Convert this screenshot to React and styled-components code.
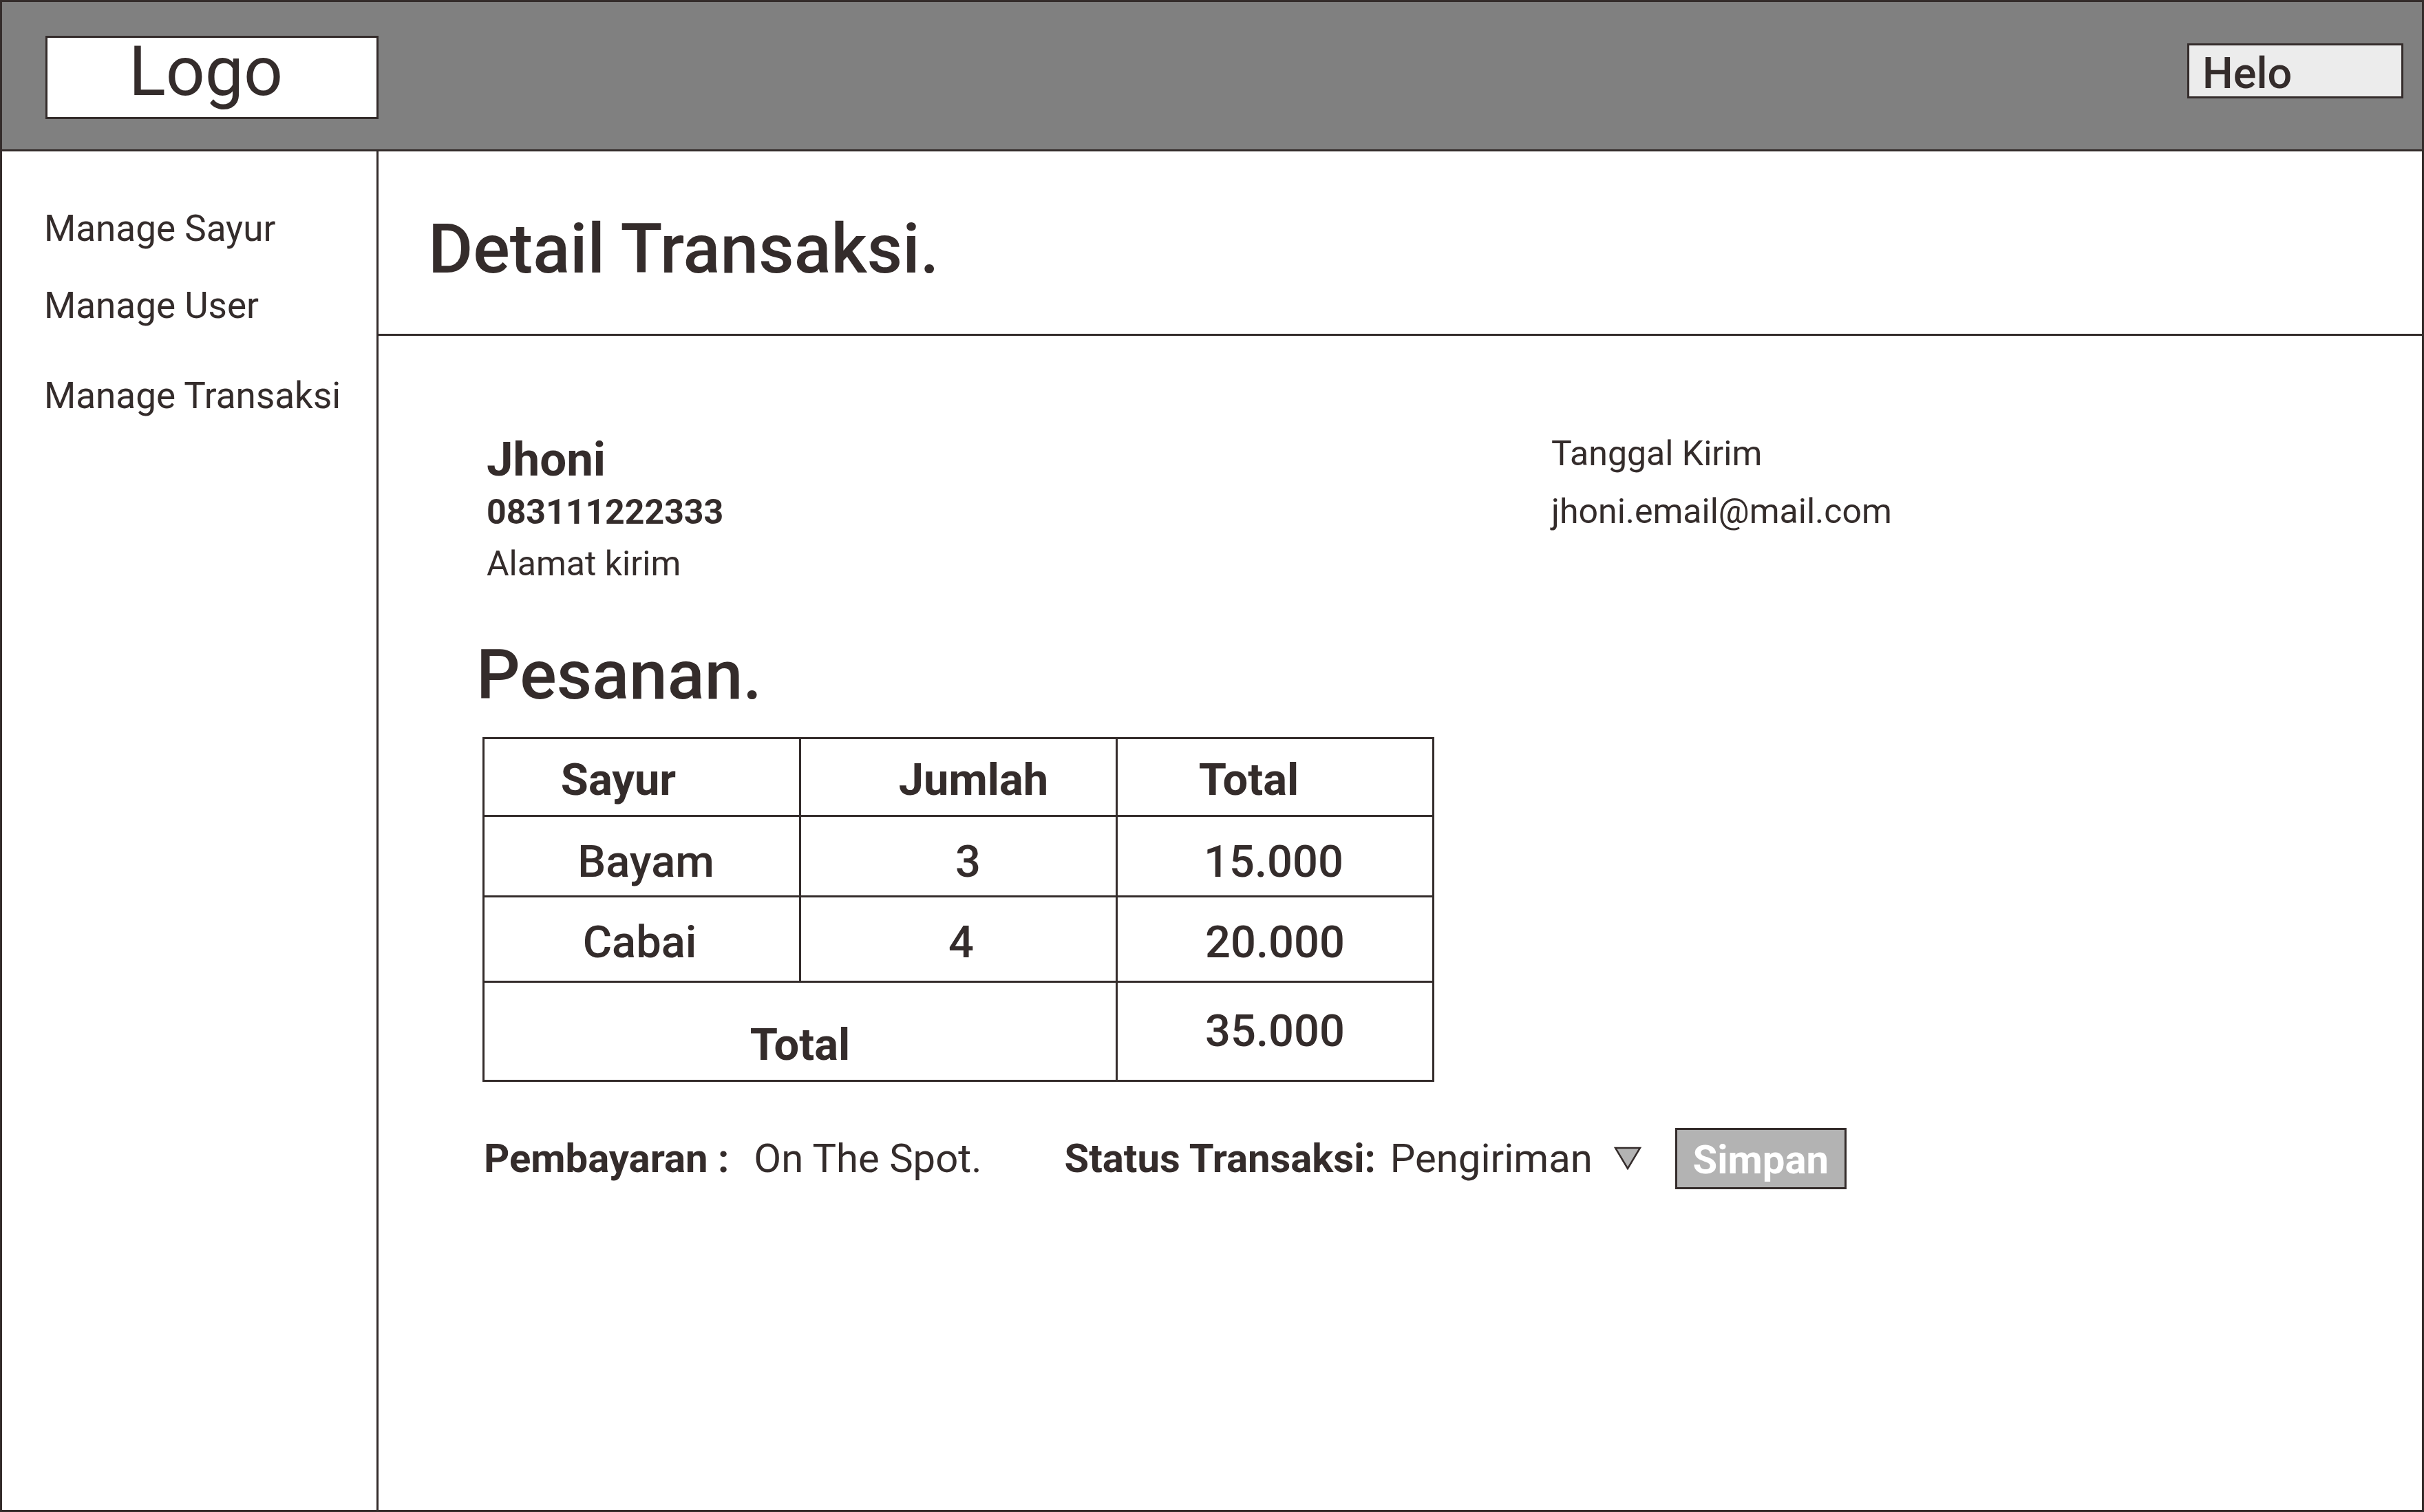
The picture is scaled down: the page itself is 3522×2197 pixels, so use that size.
import React from 'react';
import styled, { createGlobalStyle } from 'styled-components';

const ink = '#342c2b';

const GlobalStyle = createGlobalStyle`
  html, body {
    margin: 0;
    padding: 0;
    background: #fff;
  }
  body {
    font-family: Roboto, "Liberation Sans", sans-serif;
    color: ${ink};
  }
  * {
    box-sizing: border-box;
  }
`;

const Frame = styled.div`
  width: 3522px;
  height: 2197px;
  border: 3px solid ${ink};
  display: flex;
  flex-direction: column;
  background: #fff;
`;

const Header = styled.header`
  flex: 0 0 217px;
  background: #808080;
  border-bottom: 3px solid ${ink};
  display: flex;
  align-items: flex-start;
  justify-content: space-between;
  padding: 0 27px 0 63px;
`;

const LogoBox = styled.div`
  margin-top: 49px;
  width: 484px;
  height: 121px;
  background: #fff;
  border: 3px solid ${ink};
  display: flex;
  align-items: center;
  justify-content: center;
  padding: 0 18px 17px 0;
  font-size: 100px;
  line-height: 1;
`;

const UserBox = styled.div`
  margin-top: 60px;
  width: 314px;
  height: 80px;
  background: #ececec;
  border: 3px solid ${ink};
  display: flex;
  align-items: center;
  padding: 6px 0 0 19px;
  font-size: 63px;
  font-weight: 500;
  line-height: 1;
`;

const Body = styled.div`
  flex: 1;
  display: flex;
  min-height: 0;
`;

const Sidebar = styled.nav`
  flex: 0 0 547px;
  border-right: 3px solid ${ink};
  display: flex;
  flex-direction: column;
  padding: 80px 0 0 61px;
`;

const NavItem = styled.div`
  margin-top: ${(p) => p.$space || 0}px;
  font-size: 53px;
  line-height: 65px;
`;

const Main = styled.main`
  flex: 1;
  display: flex;
  flex-direction: column;
`;

const TitleBar = styled.div`
  flex: 0 0 268px;
  border-bottom: 3px solid ${ink};
  padding: 82px 0 0 72px;
`;

const PageTitle = styled.h1`
  margin: 0;
  font-size: 100px;
  font-weight: 500;
  line-height: 1.2;
`;

const Content = styled.section`
  flex: 1;
  padding: 139px 0 0 151px;
  display: flex;
  flex-direction: column;
  align-items: flex-start;
`;

const InfoRow = styled.div`
  display: flex;
  margin-left: 6px;
`;

const InfoCol = styled.div`
  width: ${(p) => (p.$width ? `${p.$width}px` : 'auto')};
  display: flex;
  flex-direction: column;
`;

const InfoLine = styled.div`
  margin-top: ${(p) => p.$space || 0}px;
  font-size: ${(p) => p.$size || 50}px;
  font-weight: ${(p) => p.$weight || 400};
  line-height: 1.2;
`;

const SectionTitle = styled.h2`
  margin: 72px 0 0 -9px;
  font-size: 100px;
  font-weight: 500;
  line-height: 1.2;
`;

const OrderTable = styled.div`
  margin-top: 30px;
  display: grid;
  grid-template-columns: repeat(3, 460px);
  grid-template-rows: 113px 117px 124px 144px;
  border-top: 3px solid ${ink};
  border-left: 3px solid ${ink};
`;

const Cell = styled.div`
  grid-column: span ${(p) => p.$span || 1};
  border-right: 3px solid ${ink};
  border-bottom: 3px solid ${ink};
  display: flex;
  align-items: center;
  justify-content: center;
  font-size: 65px;
  font-weight: ${(p) => (p.$head ? 700 : 500)};
  line-height: 1;
  padding-top: ${(p) => p.$drop || 0}px;
  padding-left: ${(p) => Math.max(0, (p.$shift || 0) * 2)}px;
  padding-right: ${(p) => Math.max(0, -(p.$shift || 0) * 2)}px;
`;

const ActionRow = styled.div`
  margin: 67px 0 0 2px;
  display: flex;
  align-items: center;
  font-size: 58px;
  line-height: 1;
`;

const FieldLabel = styled.span`
  margin-left: ${(p) => p.$space || 0}px;
  font-weight: 700;
`;

const FieldValue = styled.span`
  margin-left: ${(p) => p.$space || 0}px;
  font-weight: 400;
`;

const Caret = styled.svg`
  margin-left: 31px;
  width: 40px;
  height: 34px;
  flex: none;
`;

const SaveButton = styled.button`
  margin-left: 49px;
  width: 249px;
  height: 89px;
  background: #b3b3b3;
  border: 3px solid ${ink};
  border-radius: 0;
  color: #fff;
  font-family: Roboto, "Liberation Sans", sans-serif;
  font-size: 58px;
  font-weight: 700;
  line-height: 1;
  padding: 4px 0 0;
  display: flex;
  align-items: center;
  justify-content: center;
`;

const items = [
  { name: 'Bayam', qty: '3', total: '15.000', drop: 18, nameShift: 6, qtyShift: 14, totalShift: -2 },
  { name: 'Cabai', qty: '4', total: '20.000', drop: 10, nameShift: -3, qtyShift: 4, totalShift: 0 },
];

export default function App() {
  return (
    <>
      <GlobalStyle />
      <Frame>
        <Header>
          <LogoBox>Logo</LogoBox>
          <UserBox>Helo</UserBox>
        </Header>
        <Body>
          <Sidebar>
            <NavItem>Manage Sayur</NavItem>
            <NavItem $space={47}>Manage User</NavItem>
            <NavItem $space={66}>Manage Transaksi</NavItem>
          </Sidebar>
          <Main>
            <TitleBar>
              <PageTitle>Detail Transaksi.</PageTitle>
            </TitleBar>
            <Content>
              <InfoRow>
                <InfoCol $width={1547}>
                  <InfoLine $size={69} $weight={700}>Jhoni</InfoLine>
                  <InfoLine $space={4} $weight={700}>083111222333</InfoLine>
                  <InfoLine $space={15}>Alamat kirim</InfoLine>
                </InfoCol>
                <InfoCol>
                  <InfoLine $space={2}>Tanggal Kirim</InfoLine>
                  <InfoLine $space={24}>jhoni.email@mail.com</InfoLine>
                </InfoCol>
              </InfoRow>

              <SectionTitle>Pesanan.</SectionTitle>

              <OrderTable>
                <Cell $head $shift={-34} $drop={10}>Sayur</Cell>
                <Cell $head $shift={22} $drop={10}>Jumlah</Cell>
                <Cell $head $shift={-38} $drop={10}>Total</Cell>
                {items.map((it) => (
                  <React.Fragment key={it.name}>
                    <Cell $shift={it.nameShift} $drop={it.drop}>{it.name}</Cell>
                    <Cell $shift={it.qtyShift} $drop={it.drop}>{it.qty}</Cell>
                    <Cell $shift={it.totalShift} $drop={it.drop}>{it.total}</Cell>
                  </React.Fragment>
                ))}
                <Cell $head $span={2} $drop={40}>Total</Cell>
                <Cell>35.000</Cell>
              </OrderTable>

              <ActionRow>
                <FieldLabel>Pembayaran :</FieldLabel>
                <FieldValue $space={36}>On The Spot.</FieldValue>
                <FieldLabel $space={120}>Status Transaksi:</FieldLabel>
                <FieldValue $space={21}>Pengiriman</FieldValue>
                <Caret viewBox="0 0 40 34">
                  <polygon points="2,2 38,2 20,32" fill="#b3b3b3" stroke={ink} strokeWidth="2.5" strokeLinejoin="miter" />
                </Caret>
                <SaveButton type="button">Simpan</SaveButton>
              </ActionRow>
            </Content>
          </Main>
        </Body>
      </Frame>
    </>
  );
}
